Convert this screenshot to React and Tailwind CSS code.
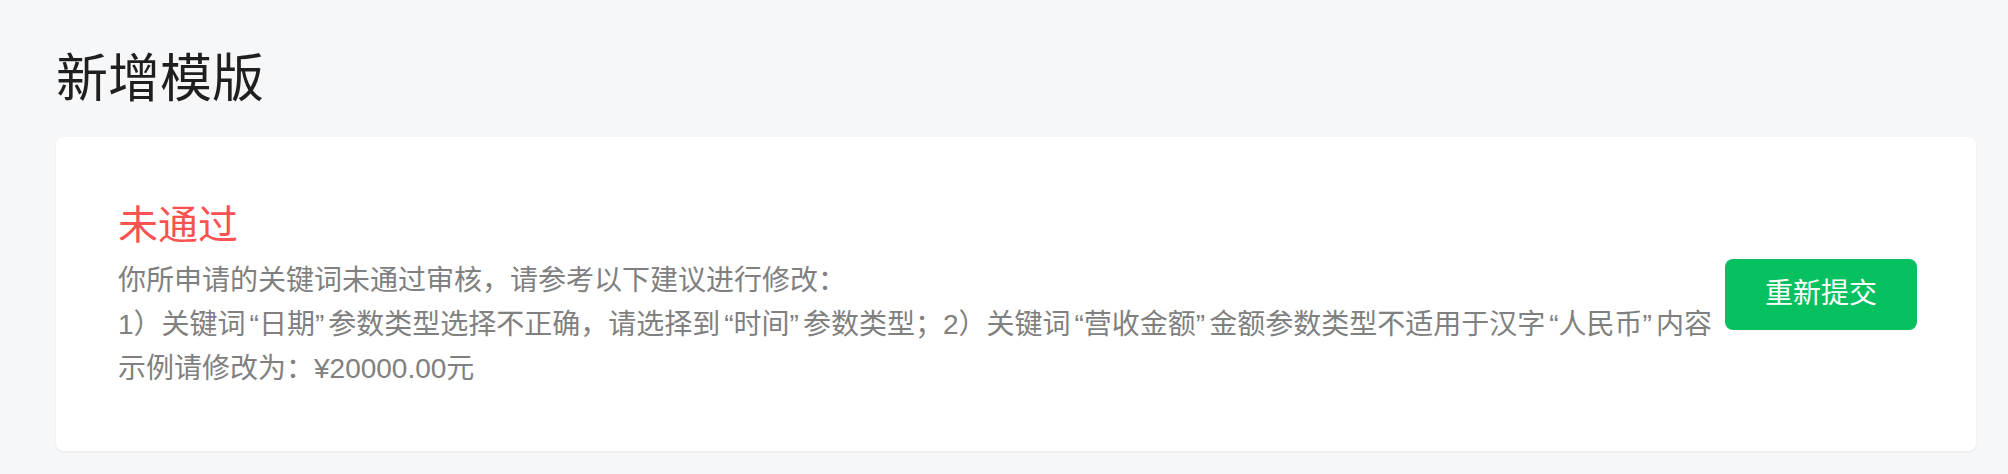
import React from "react";

const ROWS = [0, 1, 2, 3, 4, 5, 6];
const COLS = [0, 1, 2, 3, 4, 5, 6, 7, 8];

// faint account watermark laid over the whole page
const Watermark = () => (
  <div className="pointer-events-none absolute inset-0 overflow-hidden">
    <div className="mt-[-73px] ml-[-38px] flex flex-col">
      {ROWS.map((r) => (
        <div key={r} className="relative h-[92px] flex items-center">
          {COLS.map((c) => (
            <span
              key={c}
              className="w-[274px] shrink-0 text-[27px] leading-none text-black/[0.018] font-['Liberation_Sans',sans-serif]"
            >
              ad6KkwO
            </span>
          ))}
          {r % 2 === 1 && (
            <div className="absolute left-0 bottom-[-4px] whitespace-nowrap text-[6px] leading-none tracking-[3px] text-black/[0.03] font-['Liberation_Sans',sans-serif]">
              {"ad6KkwO 2024-05-17 14:32:08 ad6KkwO 2024-05-17 14:32:08 ".repeat(14)}
            </div>
          )}
        </div>
      ))}
    </div>
  </div>
);

// quoted keyword, quotes a little wider than the latin ones
const Q = ({ children }) => (
  <>
    <span className="pl-[4px]">“</span>
    {children}
    <span className="pr-[4px]">”</span>
  </>
);

export default function App() {
  return (
    <div className="relative min-h-screen bg-[#f6f7f9] overflow-hidden font-['Liberation_Sans','Noto_Sans_CJK_SC',sans-serif]">
      <div className="pt-[43px] pb-[22px]">
        <h1 className="ml-[56px] mb-[22px] text-[52px] leading-[72px] text-[#1f1f1f]">
          新增模版
        </h1>

        <div className="ml-[56px] mr-[32px] rounded-[8px] bg-white shadow-[0_1px_3px_rgba(0,0,0,0.06)] flex items-center pl-[62px] pr-[59px] py-[60px]">
          <div className="flex-1 min-w-0">
            <div className="text-[40px] leading-[56px] text-[#fa5151]">未通过</div>
            <p className="mt-[6px] text-[28px] leading-[44px] text-[#808080]">
              你所申请的关键词未通过审核，请参考以下建议进行修改：
              <br />
              1）关键词<Q>日期</Q>参数类型选择不正确，请选择到<Q>时间</Q>参数类型；2）关键词<Q>营收金额</Q>金额参数类型不适用于汉字<Q>人民币</Q>内容示例请修改为：¥20000.00元
            </p>
          </div>
          <button className="shrink-0 w-[192px] h-[71px] rounded-[8px] bg-[#07c160] text-white text-[28px] leading-none">
            重新提交
          </button>
        </div>
      </div>
      <Watermark />
    </div>
  );
}
